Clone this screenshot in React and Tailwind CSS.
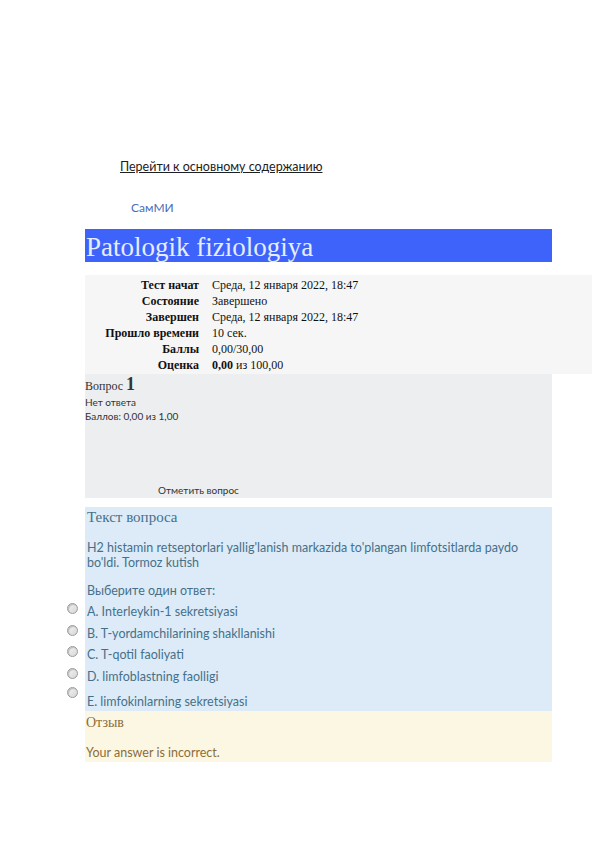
const SUMMARY = [
  ['Тест начат', 'Среда, 12 января 2022, 18:47'],
  ['Состояние', 'Завершено'],
  ['Завершен', 'Среда, 12 января 2022, 18:47'],
  ['Прошло времени', '10 сек.'],
  ['Баллы', '0,00/30,00'],
  ['Оценка', null],
];

const OPTIONS = [
  'A. Interleykin-1 sekretsiyasi',
  'B. T-yordamchilarining shakllanishi',
  'C. T-qotil faoliyati',
  'D. limfoblastning faolligi',
  'E. limfokinlarning sekretsiyasi',
];

const serif = "font-['Liberation_Serif','Times_New_Roman',serif]";
const sans = "font-['Lato','Open_Sans',sans-serif]";

function Radio() {
  return (
    <span className="block w-[11px] h-[11px] rounded-full border border-[#9a9a9a] bg-gradient-to-br from-[#f4f4f4] to-[#d6d6d6] shadow-[inset_1px_1px_1px_rgba(0,0,0,0.2)]" />
  );
}

export default function App() {
  return (
    <div className={`w-[596px] min-h-[842px] bg-white pt-[159px] ${sans}`}>
      <a href="#" className="block ml-[120px] text-[12.5px] leading-[16px] text-[#1d2125] underline">
        Перейти к основному содержанию
      </a>
      <div className="ml-[131px] mt-[25px] text-[12px] leading-[16px] text-[#4a6db8]">СамМИ</div>

      <div className="ml-[85px] mt-[13px]">
        <div className="w-[467px] h-[33px] bg-[#3e63fb] flex items-center">
          <h1 className={`${serif} text-[27px] leading-none text-[#e6edff] pl-[1px] pt-[3px]`}>Patologik fiziologiya</h1>
        </div>

        <div className={`${serif} w-[507px] mt-[13px] bg-[#f6f6f6] pt-[2px] pb-[1px] text-[12px] text-[#111]`}>
          {SUMMARY.map(([k, v]) => (
            <div key={k} className="flex leading-[16px] h-[16px]">
              <div className="w-[114px] text-right font-bold">{k}</div>
              <div className="pl-[13px]">
                {v ?? (<><b>0,00</b> из 100,00</>)}
              </div>
            </div>
          ))}
        </div>

        <div className="w-[467px] h-[124px] bg-[#eceef0] flex flex-col text-[#333]">
          <div className="mt-[1px] leading-[18px] text-[12px]">
            <span className={serif}>Вопрос </span>
            <span className={`${serif} font-bold text-[18px]`}>1</span>
          </div>
          <div className="text-[10px] leading-[14px] text-[#333]">Нет ответа</div>
          <div className="text-[10px] leading-[14px] text-[#333]">Баллов: 0,00 из 1,00</div>
          <div className="mt-auto mb-[1px] ml-[73px] text-[10px] leading-[14px] text-[#333]">Отметить вопрос</div>
        </div>

        <div className="w-[467px] mt-[9px] bg-[#dcebf7] pl-[2px] pr-[20px] text-[#46708a]">
          <div className={`${serif} text-[15px] leading-[20px]`}>Текст вопроса</div>
          <p className="mt-[13px] text-[12.5px] leading-[15px]">
            H2 histamin retseptorlari yallig'lanish markazida to'plangan limfotsitlarda paydo bo'ldi. Tormoz kutish
          </p>
          <div className="mt-[13px] text-[12.5px] leading-[15px]">Выберите один ответ:</div>
          <div className="mt-[6px]">
            {OPTIONS.map((o, i) => (
              <div key={o} className={`relative leading-[16px] text-[12.5px] ${i === 4 ? 'h-[21px] pt-[4px]' : 'h-[21.5px]'}`}>
                <span className={`absolute left-[-20px] ${i === 4 ? 'top-[-3px]' : 'top-[-1px]'}`}><Radio /></span>
                {o}
              </div>
            ))}
          </div>
        </div>

        <div className="w-[467px] bg-[#fcf7e3] pt-[3px] pb-[2px] pl-[1px] text-[#8a6d3b]">
          <div className={`${serif} text-[14px] leading-[18px]`}>Отзыв</div>
          <div className="mt-[13px] text-[12.5px] leading-[15px]">Your answer is incorrect.</div>
        </div>
      </div>
    </div>
  );
}
